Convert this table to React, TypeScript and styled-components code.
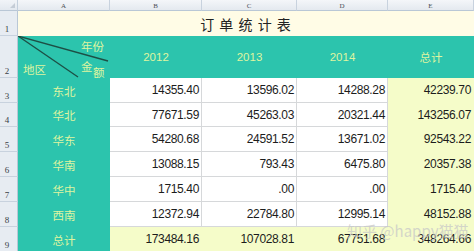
import React from "react";
import styled, { createGlobalStyle } from "styled-components";

const Global = createGlobalStyle`
  html, body { margin: 0; padding: 0; background: #ffffff; overflow: hidden; }
  #root { width: 474px; height: 251px; overflow: hidden; }
`;

const TEAL = "#2cc4ad";
const PALE = "#dff4a0";
const YELLOW = "#f5fcc9";
const GRID = "#d6d8da";

const Wrap = styled.div`
  position: relative;
  width: 474px;
  height: 251px;
  overflow: hidden;
`;

const Sheet = styled.div`
  display: grid;
  grid-template-columns: 18px 92px 92px 95px 91px 86px;
  grid-template-rows: 11px 25px 42px 25px 24px 25px 25px 25px 25px 25px;
  font-family: "Liberation Sans", Arial, "Noto Sans CJK SC", sans-serif;
`;

const Corner = styled.div`
  position: relative;
  background: linear-gradient(#f1f4f8, #e2e8ef);
  border-right: 1px solid #c3cfdc;
  border-bottom: 1px solid #b9c7d6;
  box-sizing: border-box;
  &::after {
    content: "";
    position: absolute;
    right: 2px;
    bottom: 2px;
    border-left: 5px solid transparent;
    border-bottom: 5px solid #c4ccd6;
  }
`;

const ColHead = styled.div`
  display: flex;
  align-items: center;
  justify-content: center;
  background: linear-gradient(#f4f6f9, #e4e9ef);
  border-right: 1px solid #c8d2de;
  border-bottom: 1px solid #b9c7d6;
  box-sizing: border-box;
  font-family: "Liberation Serif", "Times New Roman", serif;
  font-size: 7px;
  color: #4a4f57;
  padding-top: 1px;
`;

const RowHead = styled.div`
  display: flex;
  align-items: flex-end;
  justify-content: center;
  padding: 0 3px 1px 0;
  background: #e7ecf2;
  border-right: 1px solid #b9c7d6;
  border-bottom: 1px solid #c8d2de;
  box-sizing: border-box;
  font-family: "Liberation Serif", "Times New Roman", serif;
  font-size: 9px;
  color: #3a3f46;
`;

const TitleCell = styled.div`
  grid-column: span 5;
  display: flex;
  align-items: center;
  justify-content: center;
  background: #fffce6;
  font-family: "Noto Sans CJK SC", sans-serif;
  font-size: 14px;
  letter-spacing: 1px;
  color: #222222;
  white-space: pre;
  padding-top: 1px;
`;

const HeadCell = styled.div`
  display: flex;
  align-items: center;
  justify-content: center;
  background: ${TEAL};
  color: ${PALE};
  font-size: 11.5px;
  font-family: "Liberation Sans", Arial, "Noto Sans CJK SC", sans-serif;
`;

const DiagCell = styled.div`
  position: relative;
  background: ${TEAL};
`;

const DiagLines = styled.svg`
  position: absolute;
  inset: 0;
`;

const DiagLabel = styled.span<{ $x: number; $y: number }>`
  position: absolute;
  left: ${(p) => p.$x}px;
  top: ${(p) => p.$y}px;
  font-family: "Noto Sans CJK SC", sans-serif;
  font-size: 11.5px;
  line-height: 12px;
  color: ${PALE};
`;

const RegionCell = styled.div`
  display: flex;
  align-items: center;
  justify-content: center;
  background: ${TEAL};
  color: ${PALE};
  font-family: "Noto Sans CJK SC", sans-serif;
  font-size: 11.5px;
`;

const NumCell = styled.div<{ $yellow?: boolean }>`
  display: flex;
  align-items: center;
  justify-content: flex-end;
  padding-right: 2px;
  box-sizing: border-box;
  background: ${(p) => (p.$yellow ? YELLOW : "#ffffff")};
  border-right: 1px solid ${(p) => (p.$yellow ? YELLOW : GRID)};
  border-bottom: 1px solid ${(p) => (p.$yellow ? YELLOW : GRID)};
  font-size: 12px;
  letter-spacing: -0.35px;
  color: #1c1c1c;
`;

const Watermark = styled.div`
  position: absolute;
  left: 347px;
  top: 220px;
  font-family: "Noto Sans CJK SC", sans-serif;
  font-size: 15px;
  color: rgba(200, 200, 200, 0.75);
  white-space: nowrap;
  pointer-events: none;
`;

const rows: { region: string; values: string[]; total: string }[] = [
  { region: "东北", values: ["14355.40", "13596.02", "14288.28"], total: "42239.70" },
  { region: "华北", values: ["77671.59", "45263.03", "20321.44"], total: "143256.07" },
  { region: "华东", values: ["54280.68", "24591.52", "13671.02"], total: "92543.22" },
  { region: "华南", values: ["13088.15", "793.43", "6475.80"], total: "20357.38" },
  { region: "华中", values: ["1715.40", ".00", ".00"], total: "1715.40" },
  { region: "西南", values: ["12372.94", "22784.80", "12995.14"], total: "48152.88" },
];

const sums = ["173484.16", "107028.81", "67751.68", "348264.66"];

export default function App() {
  return (
    <Wrap>
      <Global />
      <Sheet>
        <Corner />
        {["A", "B", "C", "D", "E"].map((c) => (
          <ColHead key={c}>{c}</ColHead>
        ))}

        <RowHead>1</RowHead>
        <TitleCell>订 单 统 计 表</TitleCell>

        <RowHead>2</RowHead>
        <DiagCell>
          <DiagLines width="92" height="42" viewBox="0 0 92 42">
            <line x1="0" y1="0" x2="90" y2="25" stroke="#1d4f45" strokeWidth="1.3" />
            <line x1="0" y1="0" x2="60" y2="41" stroke="#1d4f45" strokeWidth="1.3" />
          </DiagLines>
          <DiagLabel $x={63} $y={4}>年份</DiagLabel>
          <DiagLabel $x={63} $y={24}>金</DiagLabel>
          <DiagLabel $x={75} $y={30}>额</DiagLabel>
          <DiagLabel $x={5} $y={27}>地区</DiagLabel>
        </DiagCell>
        <HeadCell>2012</HeadCell>
        <HeadCell>2013</HeadCell>
        <HeadCell>2014</HeadCell>
        <HeadCell>总计</HeadCell>

        {rows.map((r, i) => (
          <React.Fragment key={r.region}>
            <RowHead>{i + 3}</RowHead>
            <RegionCell>{r.region}</RegionCell>
            {r.values.map((v, j) => (
              <NumCell key={j}>{v}</NumCell>
            ))}
            <NumCell $yellow>{r.total}</NumCell>
          </React.Fragment>
        ))}

        <RowHead>9</RowHead>
        <RegionCell>总计</RegionCell>
        {sums.map((v, j) => (
          <NumCell key={j} $yellow>
            {v}
          </NumCell>
        ))}
      </Sheet>
      <Watermark>知乎 @happy猫猫</Watermark>
    </Wrap>
  );
}
